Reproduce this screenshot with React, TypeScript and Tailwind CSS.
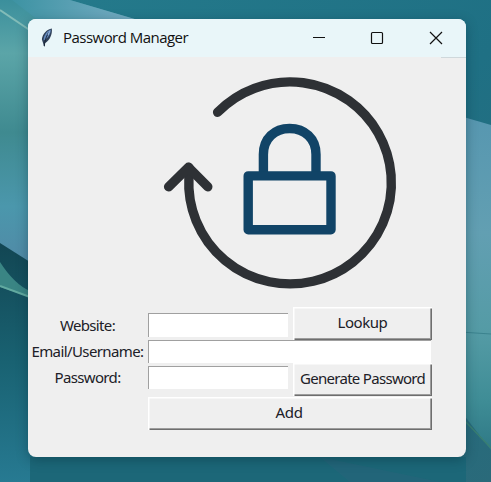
import React from "react";

const raised =
  "flex items-center justify-center bg-[#efefef] shadow-[inset_1.5px_1.5px_0_#fff,inset_-1px_-1px_0_#6e6e6e,inset_-2px_-2px_0_#9c9c9c]";
const entry =
  "bg-white border-t border-l border-t-[#a0a0a0] border-l-[#a0a0a0] outline-none";

function Wallpaper() {
  return (
    <svg className="absolute inset-0" width="491" height="482" viewBox="0 0 491 482">
      <defs>
        <linearGradient id="base" x1="0" y1="0" x2="1" y2="1">
          <stop offset="0" stopColor="#257b8c" />
          <stop offset="0.55" stopColor="#1f7084" />
          <stop offset="1" stopColor="#2a6a7a" />
        </linearGradient>
        <linearGradient id="leftLeaf" x1="0" y1="0" x2="0" y2="1">
          <stop offset="0" stopColor="#3b8f9c" />
          <stop offset="0.2" stopColor="#5ba5a8" />
          <stop offset="0.5" stopColor="#3f8a90" />
          <stop offset="0.78" stopColor="#4b97ac" />
          <stop offset="1" stopColor="#5189a6" />
        </linearGradient>
        <linearGradient id="topLeaf" x1="0" y1="0" x2="1" y2="0">
          <stop offset="0" stopColor="#3d93a3" />
          <stop offset="1" stopColor="#78adc4" />
        </linearGradient>
        <linearGradient id="rightLeaf" x1="0" y1="0" x2="0" y2="1">
          <stop offset="0" stopColor="#5797b0" />
          <stop offset="0.35" stopColor="#629fb2" />
          <stop offset="0.65" stopColor="#549ba5" />
          <stop offset="0.85" stopColor="#3f8d96" />
          <stop offset="1" stopColor="#2f7986" />
        </linearGradient>
        <linearGradient id="lower" x1="0" y1="0" x2="0" y2="1">
          <stop offset="0" stopColor="#124653" />
          <stop offset="0.5" stopColor="#196272" />
          <stop offset="1" stopColor="#277a92" />
        </linearGradient>
      </defs>
      <rect width="491" height="482" fill="url(#base)" />
      <path d="M0 457H466V482H0Z" fill="#1c6778" />
      <path d="M0 0H70L138 20V28H28V265L0 245Z" fill="url(#leftLeaf)" />
      <path d="M12 0H70L138 20H38Z" fill="url(#topLeaf)" />
      <path d="M0 10L34 33" stroke="#82bcb8" strokeWidth="2" />
      <path d="M0 243L30 262V482H0Z" fill="url(#lower)" />
      <path d="M0 262Q14 284 30 291V297L0 287Z" fill="#3a8584" />
      <path d="M0 286L30 297" stroke="#62aaa0" strokeWidth="2" />
      <path d="M460 116L491 125V450L460 410Z" fill="url(#rightLeaf)" />
      <path d="M460 332L491 334" stroke="#3b838e" />
      <path d="M462 418L491 448" stroke="#397f72" strokeWidth="1.5" />
      <path d="M320 457L440 482H350Z" fill="#2e657a" opacity=".4" />
    </svg>
  );
}

function Feather() {
  return (
    <svg width="14" height="20" viewBox="0 0 14 20">
      <path d="M11.8.6C7 1.4 2.3 6 1.9 11.5l1.2 3.8 1.1 4 .9-4.2C9.6 12.8 12.6 6.5 11.8.6Z" fill="#2f4058" />
      <path d="M10.8 1.6C7 3 3.7 7 3.5 12.6 8 10.5 10.8 6 10.8 1.6Z" fill="#6389bd" />
      <path d="M8.8 4.4C6.8 7.4 5.2 11 4.3 18" stroke="#172334" fill="none" />
      <path d="M9.6 3.4L8 7" stroke="#a3bfe4" />
    </svg>
  );
}

function Logo() {
  return (
    <svg width="438" height="250" viewBox="28 57.5 438 250" fill="none" strokeWidth="9.4" strokeLinecap="round" strokeLinejoin="round">
      <path d="M217.6 112.8A101.3 101 0 1 1 188.9 178V168" stroke="#2e3135" />
      <path d="M168.6 187.3L188.4 167.8L207.8 187.3" stroke="#2e3135" />
      <path d="M263.4 174V155C263.4 139 274.5 129 289.6 129S316 139 316 155V174" stroke="#114467" />
      <rect x="248.2" y="176.4" width="82.8" height="53.8" stroke="#114467" />
    </svg>
  );
}

export default function App() {
  return (
    <div className="relative h-[482px] w-[491px] overflow-hidden pl-7 pt-[19px] font-['Noto_Sans','Open_Sans',sans-serif]">
      <Wallpaper />
      <main className="relative h-[438px] w-[438px] overflow-hidden rounded-lg bg-[#efefef] shadow-[0_3px_12px_rgba(0,35,45,0.35)]">
        <header className="flex h-[38px] items-center bg-[#e9f6f9] pl-3">
          <Feather />
          <h1 className="ml-[9px] w-[240px] whitespace-nowrap pb-0.5 font-['Open_Sans'] text-[15px] tracking-[-0.53px] text-[#111]">Password Manager</h1>
          <svg width="145" height="20" viewBox="303 28 145 20" fill="none" stroke="#111" strokeWidth="1.2">
            <path d="M313 37.5H325M430 32L442 44M442 32L430 44" />
            <rect x="371.5" y="32.5" width="11" height="11" rx="1" />
          </svg>
        </header>
        <div className="-mb-px ml-auto h-px w-[25px] bg-[#cfd8db]" />
        <Logo />
        <form className="grid grid-cols-[120px_284px] text-[15px] leading-[20px] text-[#202027]" onSubmit={(e) => e.preventDefault()}>
          <div className="flex w-[119px] flex-col items-center pt-2">
            <label className="h-[26px] whitespace-nowrap tracking-[-0.65px]">Website:</label>
            <label className="h-[26px] whitespace-nowrap tracking-[-0.6px]">Email/Username:</label>
            <label className="h-[26px] whitespace-nowrap tracking-[-0.65px]">Password:</label>
          </div>
          <div className="flex flex-col">
            <div className="flex h-[33px] justify-between">
              <input aria-label="Website" className={`${entry} mt-[6px] h-6 w-[140px]`} />
              <button className={`${raised} h-[33px] w-[139px] pb-[3px] tracking-[-0.45px]`}>Lookup</button>
            </div>
            <input aria-label="Email/Username" className={`${entry} h-[23px] w-[283px]`} />
            <div className="flex h-[33px] justify-between">
              <input aria-label="Password" className={`${entry} mt-[3px] h-[23px] w-[140px]`} />
              <button className={`${raised} h-[33px] w-[139px] whitespace-nowrap pb-[3px] tracking-[-0.7px]`}>Generate Password</button>
            </div>
            <button className={`${raised} mt-px h-[33px] w-[284px] pb-[3px] pr-0.5 tracking-[-0.3px]`}>Add</button>
          </div>
        </form>
      </main>
    </div>
  );
}
